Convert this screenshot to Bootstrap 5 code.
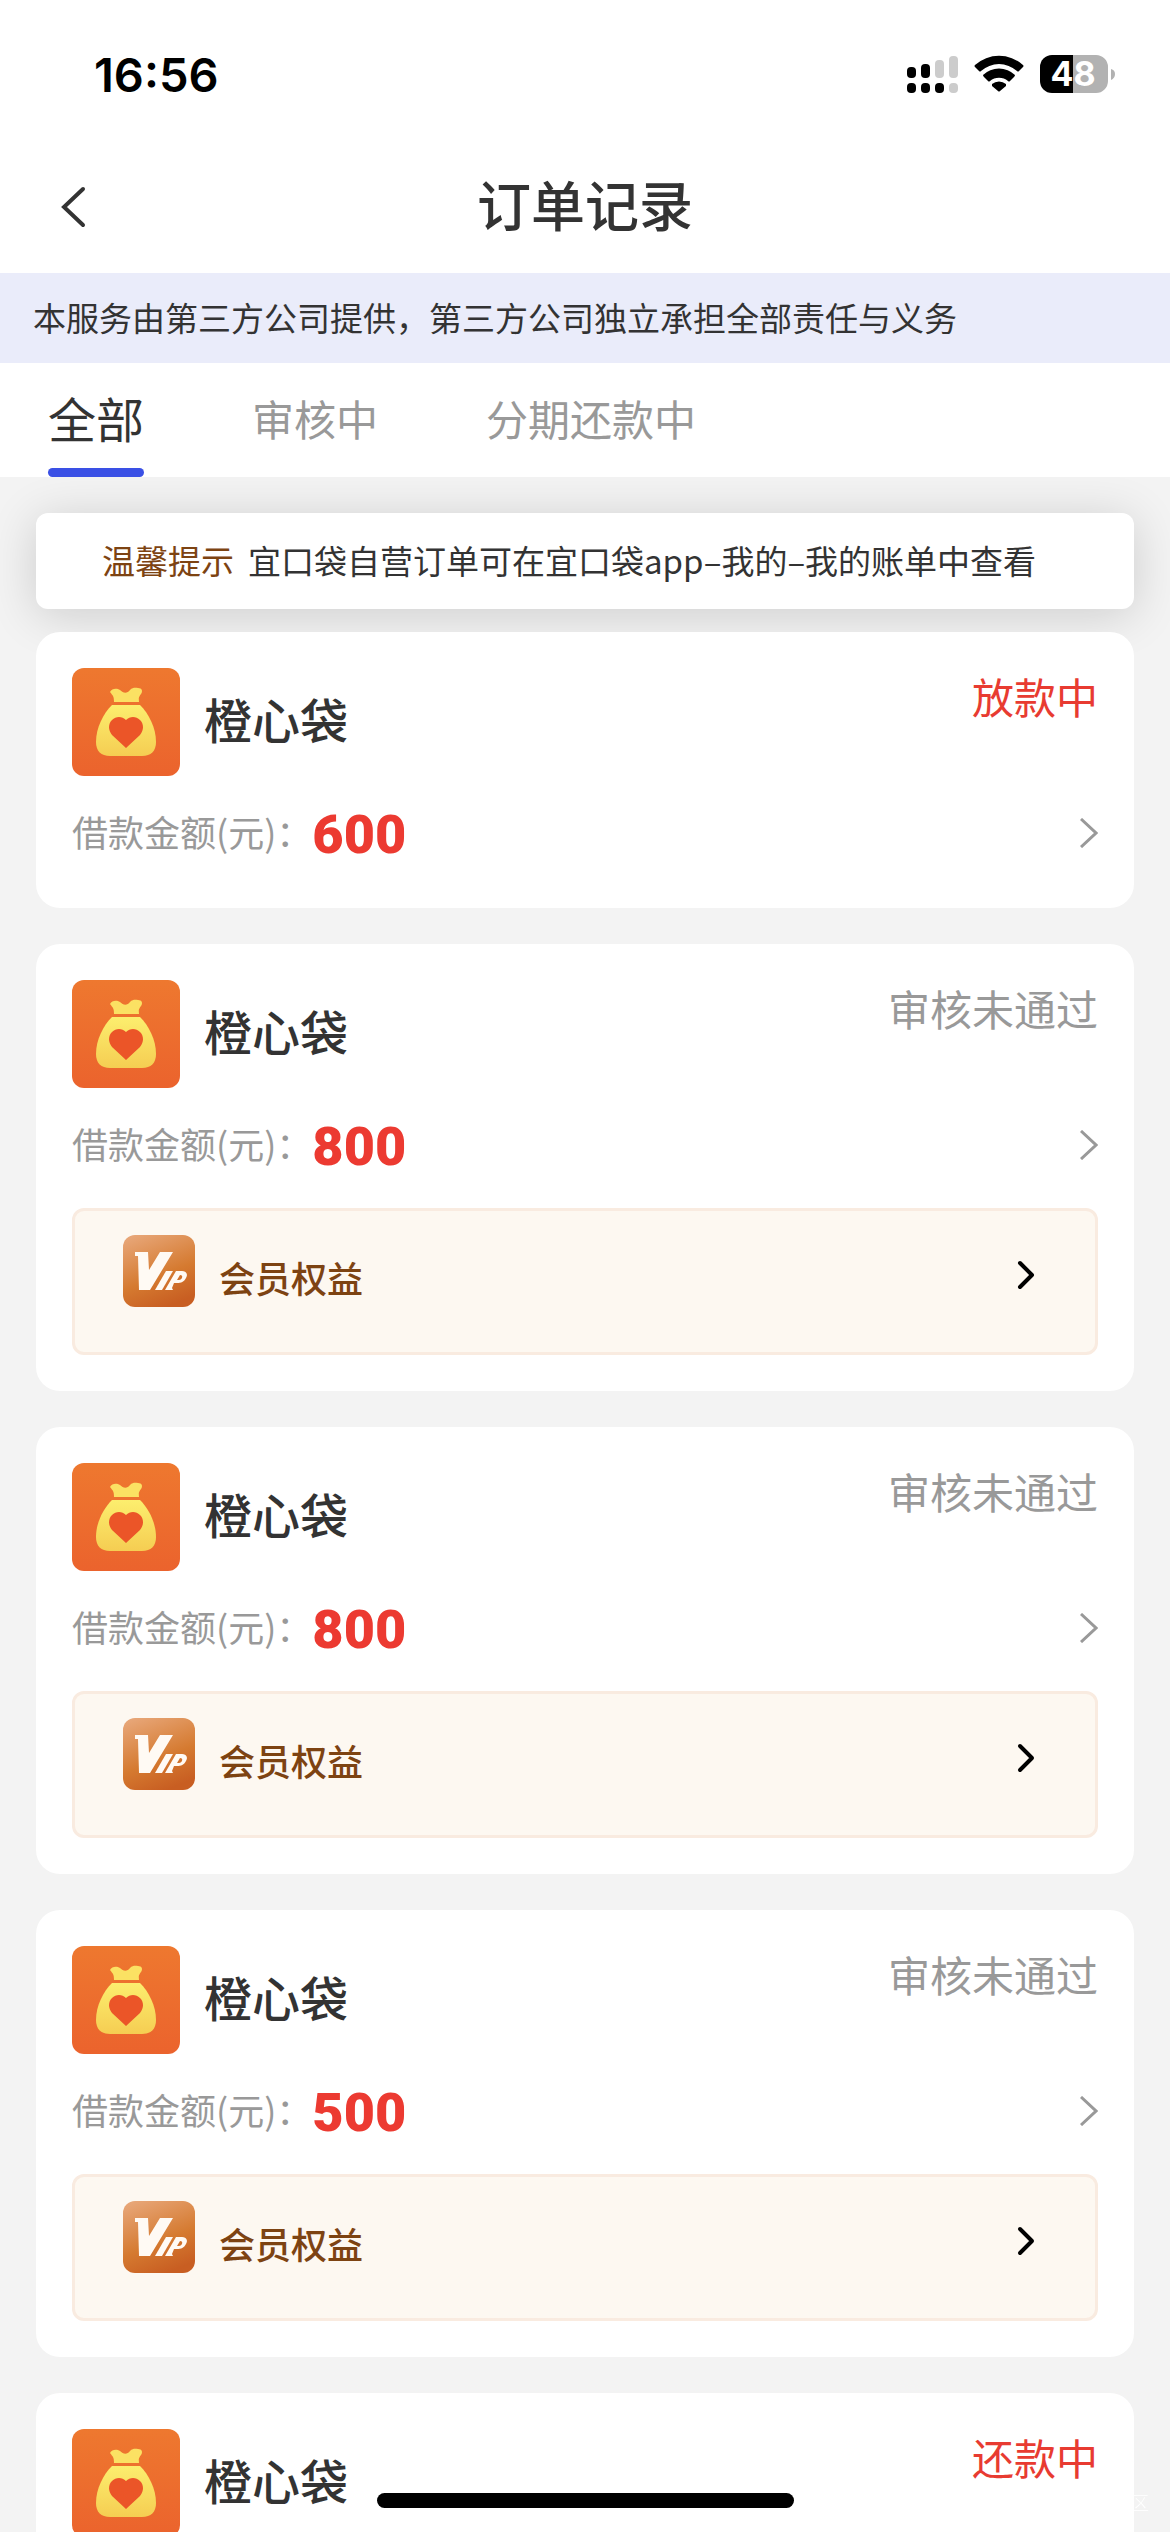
<!DOCTYPE html>
<html lang="zh-CN">
<head>
<meta charset="utf-8">
<meta name="viewport" content="width=device-width, initial-scale=1">
<title>订单记录</title>
<link href="https://cdn.jsdelivr.net/npm/bootstrap@5.3.0/dist/css/bootstrap.min.css" rel="stylesheet">
<style>
  body { font-family: "Noto Sans CJK SC", sans-serif; color: #333; background: #f3f3f3; }
  button { font-family: inherit; }
  svg { display: block; flex: none; }
  .app-status { height: 141px; padding: 7px 54px 0 94px; }
  .app-clock { font: 600 47px/1 Inter, sans-serif; color: #000; }
  .app-header { height: 132px; }
  .app-title { padding-bottom: 6px; font-size: 54px; line-height: 72px; font-weight: 500; }
  .app-back { left: 48px; }
  .app-disclaimer { height: 90px; padding: 0 33px; font-size: 33px; line-height: 88px; background: #eaecfa; }
  .app-tabs { height: 114px; padding: 0 48px; gap: 108px; }
  .app-tab { height: 114px; font-size: 42px; line-height: 110px; color: #999; text-decoration: none; }
  .app-tab.active { font-size: 48px; line-height: 108px; color: #333; }
  .app-tab.active::after { content: ""; position: absolute; left: 0; right: 0; bottom: 0; height: 9px; border-radius: 5px; background: #3a50e5; }
  .app-list { padding: 36px 36px 0; overflow-y: auto; scrollbar-width: none; }
  .app-list::-webkit-scrollbar { display: none; }
  .app-tip { height: 96px; padding: 0 66px; margin-bottom: 23px; gap: 14px; font-size: 33px; border-radius: 12px; box-shadow: 0 6px 48px rgba(0,0,0,.16); }
  .app-brown { color: #7d4312; }
  .order { padding: 36px; margin-bottom: 36px; border-radius: 24px; }
  .order-name { padding-bottom: 8px; font-size: 48px; line-height: 72px; font-weight: 500; }
  .order-state { font-size: 42px; line-height: 56px; color: #999; }
  .order-state.hot { color: #e83b31; }
  .order-row { height: 78px; margin-top: 18px; }
  .order-label { padding-bottom: 4px; font-size: 36px; color: #999; }
  .order-sum { padding-top: 4px; font: 900 54px/66px Roboto, sans-serif; color: #ec3a31; }
  .vip-box { height: 147px; margin-top: 24px; padding: 24px 60px 0 48px; color: #7d4312; background: #fdf8f1; border: 3px solid #f9ebe0; border-radius: 12px; }
  .vip-text { font-size: 36px; line-height: 84px; font-weight: 500; }
  .vip-arrow { height: 80px; }
  .home-bar { left: 50%; bottom: 24px; width: 417px; height: 15px; margin-left: -208px; border-radius: 8px; background: #000; }
  .corner-mark { right: 21px; bottom: 15px; font-size: 18px; line-height: 30px; font-weight: 300; color: #fff; }
</style>
</head>
<body>
<svg width="0" height="0" class="position-absolute" aria-hidden="true">
  <defs>
    <linearGradient id="g-bag-bg" x1="0" y1="0" x2="0" y2="1"><stop offset="0" stop-color="#ee782f"/><stop offset="1" stop-color="#eb632d"/></linearGradient>
    <linearGradient id="g-bag" x1="0" y1="0" x2="0" y2="1"><stop offset="0" stop-color="#fcee6e"/><stop offset="1" stop-color="#f5cd52"/></linearGradient>
    <linearGradient id="g-vip" x1="0.2" y1="0" x2="0.6" y2="1"><stop offset="0" stop-color="#e7a576"/><stop offset=".6" stop-color="#d57a30"/><stop offset="1" stop-color="#c85e22"/></linearGradient>
    <symbol id="i-bag" viewBox="0 0 108 108">
      <rect width="108" height="108" rx="12" fill="url(#g-bag-bg)"/>
      <path d="M38 24c2-4 7-4 10-2 3 3 7 4 10 0 3-3 6-2 8-2 4 0 5 3 3 6-3 4-2 4-2 8H42c0-6-1-6-4-10z" fill="#fbe163"/>
      <path d="M40 37h28c9 9 16 23 16 37 0 9-5 14-14 14H38c-9 0-14-5-14-14 0-14 7-28 16-37z" fill="url(#g-bag)"/>
      <path d="M54 80 40 67c-4-5-4-11 0-15 4-4 10-4 14 0 4-4 10-4 14 0 4 4 4 10 0 15z" fill="#eb5528"/>
    </symbol>
    <symbol id="i-vip" viewBox="0 0 72 72">
      <rect width="72" height="72" rx="12" fill="url(#g-vip)"/>
      <g fill="#fffaf4"><path d="M12 17h13l1 18 11-18h13L27 55H16l-1-34h-3z"/><path d="M43 36h7L39 55h-7z"/><path fill-rule="evenodd" d="M53 36h6c5 0 6 4 4 7-2 4-5 5-9 5h-3l-2 5 1 2H42zm4 4-3 5h2c3 0 5-5 1-5z"/></g>
    </symbol>
    <symbol id="i-next" viewBox="0 0 18 30"><path d="M1 1 16 15 1 29" fill="none" stroke="#999" stroke-width="3"/></symbol>
    <symbol id="i-go" viewBox="0 0 18 30"><path d="M3 3 15 15 3 27" fill="none" stroke="#000" stroke-width="4" stroke-linecap="round" stroke-linejoin="round"/></symbol>
  </defs>
</svg>

<div class="vh-100 d-flex flex-column overflow-hidden">
  <div class="bg-white flex-shrink-0">
    <div class="app-status d-flex align-items-center justify-content-between">
      <span class="app-clock">16:56</span>
      <svg width="210" height="40" viewBox="0 0 210 40" role="img" aria-label="信号、无线网络、电量 48">
        <g><rect x="1" y="13" width="9" height="11" rx="4"/><rect x="15" y="10" width="9" height="14" rx="4"/><rect x="29" y="6" width="9" height="18" rx="4" fill="#ccc"/><rect x="43" y="2" width="9" height="22" rx="4" fill="#ccc"/>
        <rect x="1" y="29" width="9" height="10" rx="4"/><rect x="15" y="29" width="9" height="10" rx="4"/><rect x="29" y="29" width="9" height="10" rx="4"/><rect x="43" y="29" width="9" height="10" rx="4" fill="#ccc"/></g>
        <path d="M69 11a36 36 0 0 1 48 0q1 1 0 2l-4 4q-1 1-2 0a27 27 0 0 0-36 0q-1 1-2 0l-4-4q-1-1 0-2zM77 21a23 23 0 0 1 32 0q0 1-1 2l-4 4q-1 1-2 0a14 14 0 0 0-18 0q-1 1-2 0l-4-4q-1-1-1-2zM86 30a11 11 0 0 1 14 0v2l-6 5q-1 1-2 0l-6-5z"/>
        <path d="M146 1h21v38h-21a12 12 0 0 1-12-12V13a12 12 0 0 1 12-12z"/>
        <path d="M167 1h23a12 12 0 0 1 12 12v14a12 12 0 0 1-12 12h-23zM205 15q4 1 4 5t-4 6z" fill="#b2b2b2"/>
        <text x="167" y="32" text-anchor="middle" font-family="Inter, sans-serif" font-weight="700" font-size="34" fill="#fff">48</text>
      </svg>
    </div>
    <header class="app-header d-flex align-items-center justify-content-center position-relative">
      <button type="button" class="btn p-2 border-0 app-back position-absolute" aria-label="返回"><svg width="36" height="42" viewBox="0 0 36 42" fill="none" stroke="#333" stroke-width="4" stroke-linecap="round"><path d="M27 3 8 21l19 18"/></svg></button>
      <h1 class="app-title m-0">订单记录</h1>
    </header>
    <div class="app-disclaimer text-nowrap">本服务由第三方公司提供，第三方公司独立承担全部责任与义务</div>
    <nav class="app-tabs d-flex text-nowrap">
      <a href="#" class="app-tab active position-relative" aria-current="page">全部</a>
      <a href="#" class="app-tab">审核中</a>
      <a href="#" class="app-tab">分期还款中</a>
    </nav>
  </div>

  <main class="app-list flex-grow-1">
    <div class="app-tip d-flex align-items-center bg-white text-nowrap"><span class="app-brown">温馨提示</span><span>宜口袋自营订单可在宜口袋app–我的–我的账单中查看</span></div>

    <article class="order bg-white">
      <div class="d-flex align-items-start justify-content-between">
        <div class="d-flex align-items-center gap-4"><svg width="108" height="108"><use href="#i-bag"/></svg><h2 class="order-name m-0">橙心袋</h2></div>
        <span class="order-state hot">放款中</span>
      </div>
      <div class="order-row d-flex align-items-center justify-content-between">
        <div class="d-flex align-items-center"><span class="order-label">借款金额(元)：</span><span class="order-sum">600</span></div>
        <svg width="18" height="30"><use href="#i-next"/></svg>
      </div>
    </article>

    <article class="order bg-white">
      <div class="d-flex align-items-start justify-content-between">
        <div class="d-flex align-items-center gap-4"><svg width="108" height="108"><use href="#i-bag"/></svg><h2 class="order-name m-0">橙心袋</h2></div>
        <span class="order-state">审核未通过</span>
      </div>
      <div class="order-row d-flex align-items-center justify-content-between">
        <div class="d-flex align-items-center"><span class="order-label">借款金额(元)：</span><span class="order-sum">800</span></div>
        <svg width="18" height="30"><use href="#i-next"/></svg>
      </div>
      <a href="#" class="vip-box d-flex align-items-start text-decoration-none gap-4"><svg width="72" height="72"><use href="#i-vip"/></svg><span class="vip-text flex-grow-1">会员权益</span><svg class="vip-arrow" width="18"><use href="#i-go"/></svg></a>
    </article>

    <article class="order bg-white">
      <div class="d-flex align-items-start justify-content-between">
        <div class="d-flex align-items-center gap-4"><svg width="108" height="108"><use href="#i-bag"/></svg><h2 class="order-name m-0">橙心袋</h2></div>
        <span class="order-state">审核未通过</span>
      </div>
      <div class="order-row d-flex align-items-center justify-content-between">
        <div class="d-flex align-items-center"><span class="order-label">借款金额(元)：</span><span class="order-sum">800</span></div>
        <svg width="18" height="30"><use href="#i-next"/></svg>
      </div>
      <a href="#" class="vip-box d-flex align-items-start text-decoration-none gap-4"><svg width="72" height="72"><use href="#i-vip"/></svg><span class="vip-text flex-grow-1">会员权益</span><svg class="vip-arrow" width="18"><use href="#i-go"/></svg></a>
    </article>

    <article class="order bg-white">
      <div class="d-flex align-items-start justify-content-between">
        <div class="d-flex align-items-center gap-4"><svg width="108" height="108"><use href="#i-bag"/></svg><h2 class="order-name m-0">橙心袋</h2></div>
        <span class="order-state">审核未通过</span>
      </div>
      <div class="order-row d-flex align-items-center justify-content-between">
        <div class="d-flex align-items-center"><span class="order-label">借款金额(元)：</span><span class="order-sum">500</span></div>
        <svg width="18" height="30"><use href="#i-next"/></svg>
      </div>
      <a href="#" class="vip-box d-flex align-items-start text-decoration-none gap-4"><svg width="72" height="72"><use href="#i-vip"/></svg><span class="vip-text flex-grow-1">会员权益</span><svg class="vip-arrow" width="18"><use href="#i-go"/></svg></a>
    </article>

    <article class="order bg-white">
      <div class="d-flex align-items-start justify-content-between">
        <div class="d-flex align-items-center gap-4"><svg width="108" height="108"><use href="#i-bag"/></svg><h2 class="order-name m-0">橙心袋</h2></div>
        <span class="order-state hot">还款中</span>
      </div>
    </article>
  </main>
</div>
<div class="home-bar position-fixed"></div>
<span class="corner-mark position-fixed">区</span>
<script src="https://cdn.jsdelivr.net/npm/bootstrap@5.3.0/dist/js/bootstrap.bundle.min.js"></script>
</body>
</html>
